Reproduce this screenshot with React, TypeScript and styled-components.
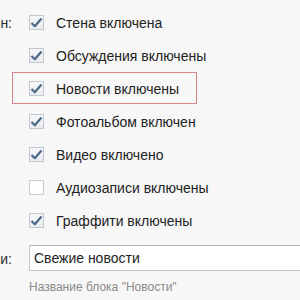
import styled, { createGlobalStyle } from "styled-components";

const GlobalStyle = createGlobalStyle`
  html, body {
    margin: 0;
    padding: 0;
    background: #f7f7f7;
  }
  body {
    font-family: "Liberation Sans", Arial, sans-serif;
    color: #222;
  }
`;

const Form = styled.div`
  width: 300px;
  height: 300px;
  overflow: hidden;
  padding-top: 6px;
  box-sizing: border-box;
  display: grid;
  grid-template-columns: 12px 1fr;
  column-gap: 17px;
  align-items: start;
`;

const Label = styled.div<{ $height: number; $offset?: number }>`
  height: ${({ $height }) => $height}px;
  padding-top: ${({ $offset = 0 }) => $offset}px;
  display: flex;
  align-items: center;
  justify-content: flex-end;
  white-space: nowrap;
  font-size: 14px;
  color: #2b2b2b;
`;

const Options = styled.div`
  display: flex;
  flex-direction: column;
`;

const Row = styled.label<{ $highlighted?: boolean }>`
  position: relative;
  height: 33px;
  display: flex;
  align-items: center;
  gap: 12px;
  font-size: 14px;
  white-space: nowrap;

  ${({ $highlighted }) =>
    $highlighted &&
    `
    &::before {
      content: "";
      position: absolute;
      left: -17px;
      top: 0;
      width: 183px;
      height: 30px;
      border: 1px solid #d9868a;
      pointer-events: none;
    }
  `}
`;

const Box = styled.span<{ $checked: boolean }>`
  width: 15px;
  height: 15px;
  box-sizing: border-box;
  flex-shrink: 0;
  border: 1px solid #c3c8ce;
  background: linear-gradient(#f6f7f9, #e9ecef);
  display: flex;
  align-items: center;
  justify-content: center;

  ${({ $checked }) => !$checked && `background: #fff; border-color: #ccc;`}
`;

const FieldRow = styled.div`
  display: flex;
  flex-direction: column;
  padding-top: 1px;
`;

const Input = styled.div`
  height: 26px;
  box-sizing: border-box;
  margin-right: -10px;
  border: 1px solid #c6c6c6;
  border-top-color: #b8b8b8;
  background: #fff;
  padding: 0 4px;
  display: flex;
  align-items: center;
  font-size: 14px;
  color: #222;
`;

const Hint = styled.div`
  margin-top: 9px;
  font-size: 12px;
  color: #8a8a8a;
`;

const Check = () => (
  <svg width="13" height="11" viewBox="0 0 13 11">
    <path
      d="M1.5 6 L4.8 9.2 L11.5 1.5"
      fill="none"
      stroke="#4e6887"
      strokeWidth="2.2"
      strokeLinejoin="round"
    />
  </svg>
);

const sections = [
  { title: "Стена включена", checked: true },
  { title: "Обсуждения включены", checked: true },
  { title: "Новости включены", checked: true, highlighted: true },
  { title: "Фотоальбом включен", checked: true },
  { title: "Видео включено", checked: true },
  { title: "Аудиозаписи включены", checked: false },
  { title: "Граффити включены", checked: true },
];

export default function App() {
  return (
    <>
      <GlobalStyle />
      <Form>
        <Label $height={33}>н:</Label>
        <Options>
          {sections.map((s) => (
            <Row key={s.title} $highlighted={s.highlighted}>
              <Box $checked={s.checked}>{s.checked && <Check />}</Box>
              {s.title}
            </Row>
          ))}
        </Options>
        <Label $height={28} $offset={1}>
          и:
        </Label>
        <FieldRow>
          <Input>Свежие новости</Input>
          <Hint>Название блока "Новости"</Hint>
        </FieldRow>
      </Form>
    </>
  );
}
